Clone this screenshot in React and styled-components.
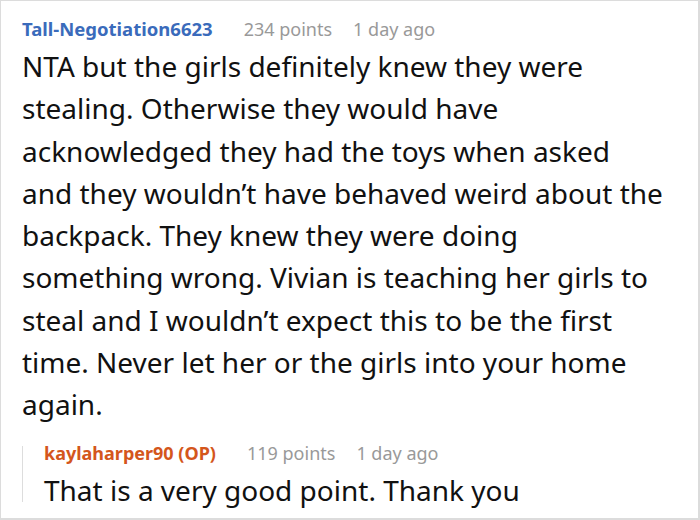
import React from 'react';
import styled, { createGlobalStyle } from 'styled-components';

const Global = createGlobalStyle`
  html, body { margin: 0; padding: 0; background: #fff; }
  body { font-family: "Noto Sans", "Open Sans", sans-serif; }
`;

const comment = {
  author: 'Tall-Negotiation6623',
  points: 234,
  time: '1 day ago',
  text: 'NTA but the girls definitely knew they were stealing. Otherwise they would have acknowledged they had the toys when asked and they wouldn\u2019t have behaved weird about the backpack. They knew they were doing something wrong. Vivian is teaching her girls to steal and I wouldn\u2019t expect this to be the first time. Never let her or the girls into your home again.',
  reply: {
    author: 'kaylaharper90 (OP)',
    points: 119,
    time: '1 day ago',
    text: 'That is a very good point. Thank you',
  },
};

const Frame = styled.div`
  width: 700px;
  height: 520px;
  box-sizing: border-box;
  border: 1px solid #dcdcdc;
  border-right-width: 2px;
  border-bottom-width: 2px;
  padding: 15px 34px 0 21px;
  overflow: hidden;
`;

const CommentBox = styled.div`
  display: flex;
  flex-direction: column;
`;

const Meta = styled.div`
  display: flex;
  align-items: baseline;
  height: 26px;
  line-height: 26px;
  font-size: 18px;
`;

const Author = styled.span`
  font-size: ${(p) => (p.$op ? '18px' : '18.5px')};
  font-weight: 700;
  color: ${(p) => (p.$op ? '#d4561c' : '#3a6bbb')};
  margin-right: 31px;
`;

const Points = styled.span`
  color: #999;
  margin-right: 21px;
`;

const Time = styled.span`
  color: #999;
`;

const Body = styled.div`
  font-size: 28px;
  line-height: 42.25px;
  color: #111;
  margin-top: 3px;
`;

const Reply = styled.div`
  position: relative;
  margin-top: 15px;
  padding-left: 22px;
  &::before {
    content: '';
    position: absolute;
    left: 0;
    top: 6px;
    bottom: 10px;
    width: 1px;
    background: #ddd;
  }
`;

const Comment = ({ author, points, time, text, op, children }) => (
  <CommentBox>
    <Meta>
      <Author $op={op}>{author}</Author>
      <Points>{points} points</Points>
      <Time>{time}</Time>
    </Meta>
    <Body>{text}</Body>
    {children}
  </CommentBox>
);

const App = () => {
  const r = comment.reply;
  return (
    <>
      <Global />
      <Frame>
        <Comment author={comment.author} points={comment.points} time={comment.time} text={comment.text}>
          <Reply>
            <Comment author={r.author} points={r.points} time={r.time} text={r.text} op />
          </Reply>
        </Comment>
      </Frame>
    </>
  );
};

export default App;
